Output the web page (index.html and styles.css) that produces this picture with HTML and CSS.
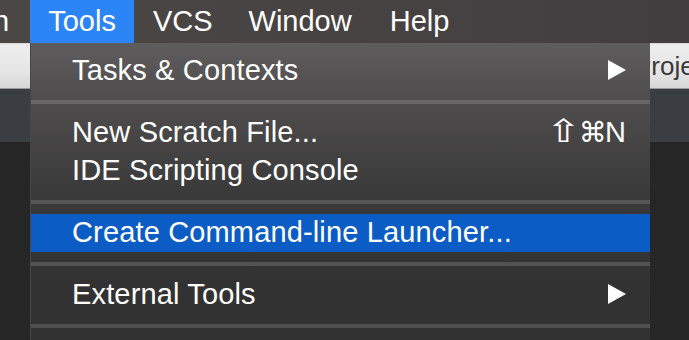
FILE: index.html
```html
<!DOCTYPE html>
<html>
<head>
<meta charset="utf-8">
<link rel="stylesheet" href="styles.css">
</head>
<body>
<div class="screen">
  <div class="menubar">
    <span class="mb-item mb-first">Run</span>
    <span class="mb-item mb-active">Tools</span>
    <span class="mb-item mb-vcs">VCS</span>
    <span class="mb-item">Window</span>
    <span class="mb-item">Help</span>
  </div>
  <div class="toolbar">
    <div class="tb-tab">Project</div>
  </div>
  <div class="panel-band"></div>
  <div class="editor"></div>

  <div class="menu">
    <div class="m-row">
      <span class="m-label">Tasks &amp; Contexts</span>
      <svg class="m-arrow" width="18" height="20" viewBox="0 0 18 20"><polygon points="0,0 18,10 0,20" fill="#fff"/></svg>
    </div>
    <div class="m-sep"></div>
    <div class="m-row">
      <span class="m-label">New Scratch File...</span>
      <span class="m-shortcut"><span class="sym shift">⇧</span><span class="sym cmd">⌘</span><span class="key">N</span></span>
    </div>
    <div class="m-row">
      <span class="m-label">IDE Scripting Console</span>
    </div>
    <div class="m-sep"></div>
    <div class="m-row m-selected">
      <span class="m-label">Create Command-line Launcher...</span>
    </div>
    <div class="m-sep"></div>
    <div class="m-row">
      <span class="m-label">External Tools</span>
      <svg class="m-arrow" width="18" height="20" viewBox="0 0 18 20"><polygon points="0,0 18,10 0,20" fill="#fff"/></svg>
    </div>
    <div class="m-sep"></div>
  </div>
</div>
</body>
</html>
```
FILE: styles.css
```css
* { box-sizing: border-box; }
html, body {
  margin: 0;
  padding: 0;
  width: 689px;
  height: 340px;
  overflow: hidden;
  background: #262626;
  font-family: "Liberation Sans", Arial, sans-serif;
}
.screen {
  position: relative;
  width: 689px;
  height: 340px;
  overflow: hidden;
  display: flex;
  flex-direction: column;
}
.menubar {
  height: 43px;
  flex: none;
  display: flex;
  align-items: stretch;
  background: linear-gradient(to right, #4b4845, #433e40);
  margin-left: -63px;
  white-space: nowrap;
}
.mb-item {
  color: #fff;
  font-size: 29px;
  line-height: 43px;
  padding: 0 19px;
}
.mb-first { padding-right: 21px; }
.mb-active {
  background: #2c85f6;
  padding: 0 18px 0 18px;
}
.mb-vcs { padding-right: 17px; }
.toolbar {
  height: 46px;
  flex: none;
  display: flex;
  background: linear-gradient(to bottom, #d9d3d6 0, #eeeeee 2px, #e6e6e6 60%, #d8d8d8 100%);
  border-bottom: 1px solid #9a9a9a;
}
.tb-tab {
  margin-left: 634px;
  font-size: 26px;
  line-height: 46px;
  color: #3a3a3a;
  white-space: nowrap;
}
.panel-band {
  height: 53px;
  flex: none;
  background: #3a3e42;
}
.editor {
  flex: 1;
  background: #262626;
}
.menu {
  position: absolute;
  left: 30px;
  top: 43px;
  width: 620px;
  height: 320px;
  padding-top: 9px;
  background: linear-gradient(to bottom, #5e5c5c 0, #4e4c4c 60px, #3b3a3a 150px, #333232 240px, #323131 100%);
  border-left: 1px solid #474545;
}
.m-row {
  height: 38px;
  display: flex;
  align-items: center;
  padding: 0 24px 2px 41px;
  color: #fff;
  font-size: 29px;
  line-height: 36px;
  letter-spacing: 0.15px;
  white-space: nowrap;
}
.m-label { flex: 1; }
.m-selected {
  background: #0b5dc5;
}
.m-arrow {
  flex: none;
}
.m-shortcut {
  flex: none;
  display: flex;
  align-items: baseline;
  letter-spacing: 0;
}
.sym {
  font-family: "DejaVu Sans", sans-serif;
  display: inline-block;
}
.shift {
  font-size: 32px;
  transform: scaleX(1.35);
  margin-right: 2px;
}
.cmd {
  font-size: 28px;
  margin-right: -2px;
}
.m-sep {
  height: 24px;
  padding-top: 10px;
}
.m-sep::before {
  content: "";
  display: block;
  height: 4px;
  background: rgba(255, 255, 255, 0.15);
}
```
